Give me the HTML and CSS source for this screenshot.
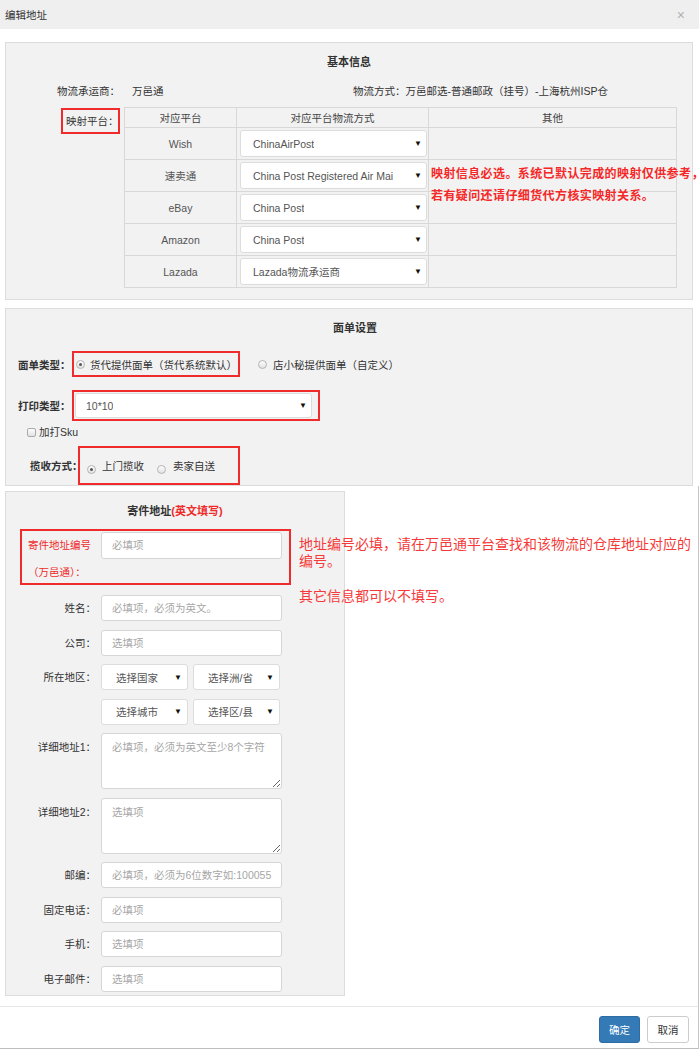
FILE: index.html
```html
<!DOCTYPE html>
<html lang="zh-CN">
<head>
<meta charset="utf-8">
<title>编辑地址</title>
<link rel="stylesheet" href="styles.css">
</head>
<body>
<div class="modal">
  <div class="modal-header">
    <span class="modal-title">编辑地址</span>
    <span class="modal-close">×</span>
  </div>
  <div class="modal-body">
    <div class="sec sec-basic">
      <div class="sec-title">基本信息</div>
      <div class="info">
        <span class="info-label">物流承运商：</span>
        <span class="info-value">万邑通</span>
        <span class="info-method">物流方式：万邑邮选-普通邮政（挂号）-上海杭州ISP仓</span>
      </div>
      <div class="map-row">
        <div class="redbox map-label">映射平台：</div>
        <table class="map-table">
          <thead>
            <tr><th class="c1">对应平台</th><th class="c2">对应平台物流方式</th><th class="c3">其他</th></tr>
          </thead>
          <tbody>
            <tr><td>Wish</td><td class="selcell"><div class="select"><span class="sel-text">ChinaAirPost</span><span class="arrow">▼</span></div></td><td></td></tr>
            <tr><td>速卖通</td><td class="selcell"><div class="select"><span class="sel-text">China Post Registered Air Mai</span><span class="arrow">▼</span></div></td><td></td></tr>
            <tr><td>eBay</td><td class="selcell"><div class="select"><span class="sel-text">China Post</span><span class="arrow">▼</span></div></td><td></td></tr>
            <tr><td>Amazon</td><td class="selcell"><div class="select"><span class="sel-text">China Post</span><span class="arrow">▼</span></div></td><td></td></tr>
            <tr class="last"><td>Lazada</td><td class="selcell"><div class="select"><span class="sel-text">Lazada物流承运商</span><span class="arrow">▼</span></div></td><td></td></tr>
          </tbody>
        </table>
      </div>
      <div class="map-note">映射信息必选。系统已默认完成的映射仅供参考，<br>若有疑问还请仔细货代方核实映射关系。</div>
    </div>

    <div class="sec sec-sheet">
      <div class="sec-title">面单设置</div>
      <div class="srow row-type">
        <span class="blabel">面单类型：</span>
        <div class="redbox type-box">
          <span class="radio on"></span><span class="rtext">货代提供面单（货代系统默认）</span>
        </div>
        <span class="radio radio-out"></span><span class="rtext">店小秘提供面单（自定义）</span>
      </div>
      <div class="srow row-print">
        <span class="blabel">打印类型：</span>
        <div class="redbox print-box">
          <div class="select print-select"><span class="sel-text">10*10</span><span class="arrow">▼</span></div>
        </div>
      </div>
      <div class="srow row-check">
        <span class="checkbox"></span><span class="ctext">加打Sku</span>
      </div>
      <div class="srow row-pick">
        <span class="blabel pick-label">揽收方式：</span>
        <div class="redbox pick-box">
          <span class="radio on pick-radio"></span><span class="rtext">上门揽收</span>
          <span class="radio pick-radio pick-radio2"></span><span class="rtext">卖家自送</span>
        </div>
      </div>
    </div>
  </div>

  <div class="lower">
    <div class="sec sec-sender">
      <div class="sec-title">寄件地址<span class="red-title">(英文填写)</span></div>
      <div class="redbox code-box">
        <div class="code-label">寄件地址编号<br>（万邑通）：</div>
        <div class="input code-input">必填项</div>
      </div>
      <div class="frow first">
        <span class="flabel">姓名：</span>
        <div class="input">必填项，必须为英文。</div>
      </div>
      <div class="frow">
        <span class="flabel">公司：</span>
        <div class="input">选填项</div>
      </div>
      <div class="frow">
        <span class="flabel">所在地区：</span>
        <div class="select rsel"><span class="sel-text">选择国家</span><span class="arrow">▼</span></div>
        <div class="select rsel"><span class="sel-text">选择洲/省</span><span class="arrow">▼</span></div>
      </div>
      <div class="frow">
        <span class="flabel"></span>
        <div class="select rsel"><span class="sel-text">选择城市</span><span class="arrow">▼</span></div>
        <div class="select rsel"><span class="sel-text">选择区/县</span><span class="arrow">▼</span></div>
      </div>
      <div class="frow">
        <span class="flabel tlabel">详细地址1：</span>
        <textarea class="tarea" placeholder="必填项，必须为英文至少8个字符"></textarea>
      </div>
      <div class="frow">
        <span class="flabel tlabel">详细地址2：</span>
        <textarea class="tarea" placeholder="选填项"></textarea>
      </div>
      <div class="frow">
        <span class="flabel">邮编：</span>
        <div class="input">必填项，必须为6位数字如:100055</div>
      </div>
      <div class="frow">
        <span class="flabel">固定电话：</span>
        <div class="input">必填项</div>
      </div>
      <div class="frow">
        <span class="flabel">手机：</span>
        <div class="input">选填项</div>
      </div>
      <div class="frow">
        <span class="flabel">电子邮件：</span>
        <div class="input">选填项</div>
      </div>
    </div>
    <div class="sender-note">
      <p>地址编号必填，请在万邑通平台查找和该物流的仓库地址对应的编号。</p>
      <p class="note2">其它信息都可以不填写。</p>
    </div>
  </div>

  <div class="modal-footer">
    <button class="btn btn-primary">确定</button>
    <button class="btn btn-default">取消</button>
  </div>
</div>
</body>
</html>
```

FILE: styles.css
```css
* { box-sizing: border-box; }
html, body { margin: 0; padding: 0; background: #fff; }
body {
  font-family: "Liberation Sans", "Noto Sans CJK SC", sans-serif;
  font-size: 10.5px;
  color: #333;
}
.modal { width: 699px; height: 1050px; overflow: hidden; }

.modal-header {
  height: 29px;
  background: #efefef;
  display: flex;
  align-items: center;
  justify-content: space-between;
  padding: 0 14px 0 5px;
}
.modal-title { font-size: 10.5px; color: #333; }
.modal-close { font-size: 14px; color: #b0b0b0; line-height: 1; }

.modal-body { padding: 13px 0 0 5px; }

.sec {
  background: #f2f2f2;
  border: 1px solid #dcdcdc;
  position: relative;
}
.sec-title {
  text-align: center;
  font-weight: bold;
  font-size: 11px;
  line-height: 14px;
  padding-top: 12px;
  color: #333;
}

/* basic info */
.sec-basic { width: 688px; padding-bottom: 11px; }
.info { margin-top: 15px; line-height: 14px; display: flex; padding-left: 51px; white-space: nowrap; }
.info-label { width: 75px; }
.info-value { width: 221px; }
.map-row { display: flex; align-items: flex-start; margin-top: 9px; padding-left: 55px; }
.redbox { border: 2px solid #ef2b2b; }
.map-label { width: 59px; height: 26px; line-height: 22px; padding-left: 3px; margin-top: 1px; white-space: nowrap; }
.map-table {
  margin-left: 4px;
  border-collapse: collapse;
  border: 1px solid #d2d2d2;
  table-layout: fixed;
  width: 552px;
}
.map-table th, .map-table td {
  border: 1px solid #d8d8d8;
  text-align: center;
  font-weight: normal;
  padding: 0;
  color: #444;
}
.map-table th { height: 20px; }
.map-table td { height: 32px; color: #555; }
.map-table .c1 { width: 112px; }
.map-table .c2 { width: 192px; }
.map-table .c3 { width: 248px; }
.map-table td.selcell { padding: 0 1px 0 3px; }

.select {
  display: flex;
  align-items: center;
  justify-content: space-between;
  background: #fff;
  border: 1px solid #dcdcdc;
  border-radius: 3px;
  height: 27px;
  padding: 0 4px 0 12px;
  color: #555;
  text-align: left;
}
.sel-text { overflow: hidden; white-space: nowrap; }
.arrow { font-size: 8px; color: #111; flex: none; margin-left: 4px; }

.map-note {
  position: absolute;
  left: 425px;
  top: 120px;
  font-size: 12px;
  line-height: 22px;
  font-weight: bold;
  letter-spacing: 0.4px;
  color: #f52828;
  white-space: nowrap;
}

/* sheet settings */
.sec-sheet { width: 688px; margin-top: 8px; padding-left: 12px; }
.srow { display: flex; align-items: center; white-space: nowrap; }
.blabel { font-weight: bold; width: 54px; color: #333; }
.row-type { margin-top: 16px; }
.type-box { width: 168px; height: 26px; display: flex; align-items: center; padding-left: 2px; }
.radio {
  display: inline-block;
  width: 9px;
  height: 9px;
  border-radius: 50%;
  border: 1px solid #b4b4b4;
  background: linear-gradient(#fdfdfd, #e2e2e2);
  position: relative;
  flex: none;
}
.radio.on::after {
  content: "";
  position: absolute;
  left: 2px;
  top: 2px;
  width: 3px;
  height: 3px;
  border-radius: 50%;
  background: #555;
}
.rtext { margin-left: 5px; }
.radio-out { margin-left: 18px; }
.row-type .radio-out + .rtext { margin-left: 6px; }

.row-print { margin-top: 13px; }
.print-box { width: 248px; height: 31px; padding: 1px 6px 1px 1px; }
.print-select { height: 25px; padding-left: 10px; }

.row-check { margin-top: 6px; padding-left: 9px; line-height: 11px; }
.checkbox {
  display: inline-block;
  width: 9px;
  height: 9px;
  border: 1px solid #aaa;
  border-radius: 2px;
  background: linear-gradient(#fdfdfd, #e2e2e2);
}
.ctext { margin-left: 3px; }

.row-pick { margin-top: 8px; }
.pick-label { width: 48px; margin-left: 12px; overflow: visible; }
.pick-box { width: 162px; height: 39px; display: flex; align-items: center; padding-left: 7px; }
.pick-radio { margin-top: 8px; }
.pick-box .rtext { margin-left: 6px; }
.pick-radio2 { margin-left: 13px; }
.pick-box .pick-radio2 + .rtext { margin-left: 7px; }

/* lower area */
.lower {
  position: relative;
  padding: 5px 0 10px 5px;
  border-right: 1px solid #c4c4c4;
}
.sec-sender { width: 340px; padding-bottom: 3.5px; }
.red-title { color: #ef2b2b; }
.code-box {
  width: 271px;
  height: 56px;
  margin: 11px 0 0 14px;
  display: flex;
  padding: 1px 7px 0 6px;
}
.code-label { width: 73px; line-height: 27px; color: #ef2b2b; white-space: nowrap; }
.input {
  width: 181px;
  height: 26px;
  background: #fff;
  border: 1px solid #d6d6d6;
  border-radius: 3px;
  padding: 0 10px;
  line-height: 24px;
  color: #a6a6a6;
  white-space: nowrap;
  overflow: hidden;
}
.code-input { height: 27px; line-height: 25px; }

.frow { display: flex; align-items: flex-start; margin-top: 8.5px; }
.frow.first { margin-top: 10px; }
.flabel { width: 90px; margin-right: 5px; text-align: right; line-height: 26px; color: #333; white-space: nowrap; }
.tlabel { line-height: 14px; padding-top: 7px; }
.rsel { width: 87px; height: 26px; padding: 0 5px 0 14px; }
.rsel + .rsel { margin-left: 5px; }
.tarea {
  width: 181px;
  height: 56px;
  border: 1px solid #d6d6d6;
  border-radius: 3px;
  background: #fff;
  padding: 5px 10px;
  font-family: "Liberation Sans", "Noto Sans CJK SC", sans-serif;
  font-size: 10.5px;
  margin: 0;
  resize: both;
}
.tarea::placeholder { color: #a6a6a6; }

.sender-note {
  position: absolute;
  left: 299px;
  top: 50px;
  width: 396px;
  font-size: 14px;
  line-height: 17px;
  color: #f43a3a;
}
.sender-note p { margin: 0; }
.sender-note .note2 { margin-top: 18px; }

.modal-footer {
  border-top: 1px solid #e6e6e6;
  border-right: 1px solid #c4c4c4;
  border-bottom: 1px solid #bdbdbd;
  display: flex;
  justify-content: flex-end;
  gap: 7px;
  padding: 9px 9px 5px 0;
}
.btn {
  height: 27px;
  font-family: "Liberation Sans", "Noto Sans CJK SC", sans-serif;
  font-size: 10.5px;
  border-radius: 3px;
  padding: 0;
  margin: 0;
}
.btn-primary { width: 41px; background: #337ab7; border: 1px solid #2e6da4; color: #fff; }
.btn-default { width: 42px; background: #fff; border: 1px solid #ccc; color: #333; }
```
